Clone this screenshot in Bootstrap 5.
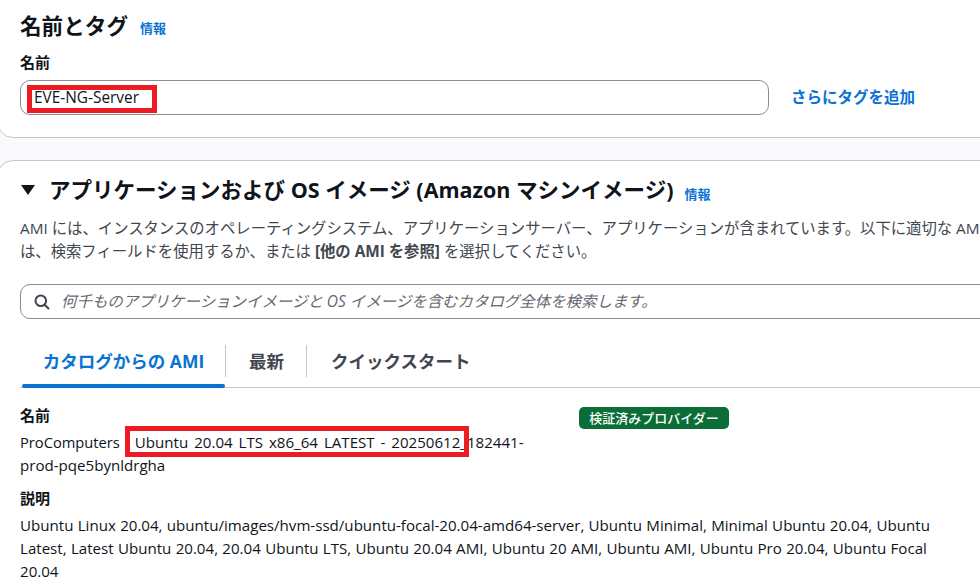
<!DOCTYPE html>
<html lang="ja">
<head>
<meta charset="utf-8">
<link rel="stylesheet" href="https://cdn.jsdelivr.net/npm/bootstrap@5.3.0/dist/css/bootstrap.min.css">
<style>
html,body{height:578px;overflow:hidden;background:#fafafc}
body{font-family:"Open Sans","Noto Sans CJK JP",sans-serif;color:#16191f;font-size:14px;position:relative}
.panel{background:#fff;border:1px solid #c6c6cd;border-radius:16px;margin-left:-3px;width:1020px;padding-left:22px}
.panel-a{height:159px;margin-top:-21px;padding-top:30px}
.panel-b{height:460px;margin-top:22px;padding-top:13px}
.ttl{font-size:21.6px;font-weight:700;line-height:32px;color:#0f141a}
.ttl-b{font-size:21.5px;font-weight:700;line-height:32px;color:#0f141a;white-space:nowrap}
.info{font-size:13px;font-weight:600;color:#0972d3;text-decoration:none;margin-top:5px}
.info-b{margin-top:9px;margin-left:11px}
.lab{font-size:15px;font-weight:700;line-height:20px;color:#0f141a}
.fieldbox{height:35px;border:1px solid #8c8c94;border-radius:10px;padding-left:13px;line-height:33px;background:#fff;font-size:15.4px;color:#0f141a}
.addtag{font-size:15.5px;font-weight:700;color:#0972d3;text-decoration:none;white-space:nowrap}
.desc{font-size:15.35px;line-height:23px;color:#414750;white-space:nowrap}
.searchbox{height:35px;width:1000px;border:1px solid #8c8c94;border-radius:10px;padding-left:13px;color:#656871;font-style:italic;font-size:15.45px;white-space:nowrap}
.tabbar{border-bottom:1px solid #c6c6cd;height:52px;width:1000px;margin-top:17px;padding-left:2px}
.tabitem{font-size:17.5px;font-weight:700;color:#424650;height:32px;line-height:32px;margin-top:9px;white-space:nowrap;padding:0 22px 0 23px;border-right:1px solid #c6c6cd}
.tabitem.first{color:#0972d3;padding:0;width:204px;position:relative;text-align:center}
.tabitem.last{border-right:0;padding-left:24px}
.tabline{position:absolute;left:0;right:0;top:39px;height:4px;border-radius:3px;background:#0972d3}
.val{font-size:15.1px;line-height:23px;color:#0f141a}
.val-a{font-size:14.7px;margin-right:15px}
.val-b{word-spacing:2px}
.val-c{word-spacing:.4px}
.okbadge{background:#0b6e37;color:#fff;font-size:13px;font-weight:500;border-radius:5px;height:22px;line-height:22px;width:150px;text-align:center;margin-top:2px}
.redmark{position:absolute;border:5px solid #ed1c24;pointer-events:none}
.mark-a{left:27px;top:85px;width:130px;height:28px}
.mark-b{left:125px;top:426px;width:344px;height:31px}
</style>
</head>
<body>
<div class="panel panel-a">
  <div class="d-flex align-items-center gap-2">
    <span class="ttl">名前とタグ</span><span class="info ms-1">情報</span>
  </div>
  <div class="lab" style="margin-top:10px">名前</div>
  <div class="d-flex align-items-center" style="margin-top:8px">
    <div class="fieldbox" style="width:749px">EVE-NG-Server</div>
    <a class="addtag" href="#" style="margin-left:22px">さらにタグを追加</a>
  </div>
</div>
<div class="panel panel-b">
  <div class="d-flex align-items-center">
    <svg width="16" height="12" viewBox="0 0 16 12" style="margin-right:13px"><path d="M1 1h14L8 11z" fill="#0f141a"/></svg>
    <span class="ttl-b">アプリケーションおよび OS イメージ (Amazon マシンイメージ)</span><span class="info info-b">情報</span>
  </div>
  <div class="desc" style="margin-top:11px">AMI には、インスタンスのオペレーティングシステム、アプリケーションサーバー、アプリケーションが含まれています。以下に適切な AMI が表示されない場合<br>は、検索フィールドを使用するか、または <b>[他の AMI を参照]</b> を選択してください。</div>
  <div class="searchbox d-flex align-items-center" style="margin-top:21px">
    <svg width="16" height="16" viewBox="0 0 16 16" style="margin-right:11px;flex:none" fill="none" stroke="#424650" stroke-width="2"><circle cx="6.8" cy="6.8" r="5.3"/><path d="M10.7 10.7 15 15"/></svg>
    何千ものアプリケーションイメージと OS イメージを含むカタログ全体を検索します。
  </div>
  <div class="tabbar d-flex">
    <div class="tabitem first">カタログからの AMI<span class="tabline"></span></div>
    <div class="tabitem">最新</div>
    <div class="tabitem last">クイックスタート</div>
  </div>
  <div class="d-flex" style="margin-top:17px">
    <div style="width:559px">
      <div class="lab">名前</div>
      <div class="val" style="width:510px;margin-top:6px"><span class="val-a">ProComputers</span><span class="val-b">Ubuntu 20.04 LTS x86_64 LATEST - 20250612_182441-prod-pqe5bynldrgha</span></div>
    </div>
    <div class="okbadge">検証済みプロバイダー</div>
  </div>
  <div class="lab" style="margin-top:11px">説明</div>
  <div class="val val-c" style="width:925px;margin-top:6px">Ubuntu Linux 20.04, ubuntu/images/hvm-ssd/ubuntu-focal-20.04-amd64-server, Ubuntu Minimal, Minimal Ubuntu 20.04, Ubuntu Latest, Latest Ubuntu 20.04, 20.04 Ubuntu LTS, Ubuntu 20.04 AMI, Ubuntu 20 AMI, Ubuntu AMI, Ubuntu Pro 20.04, Ubuntu Focal 20.04</div>
</div>
<div class="redmark mark-a"></div>
<div class="redmark mark-b"></div>
<script src="https://cdn.jsdelivr.net/npm/bootstrap@5.3.0/dist/js/bootstrap.bundle.min.js"></script>
</body>
</html>
